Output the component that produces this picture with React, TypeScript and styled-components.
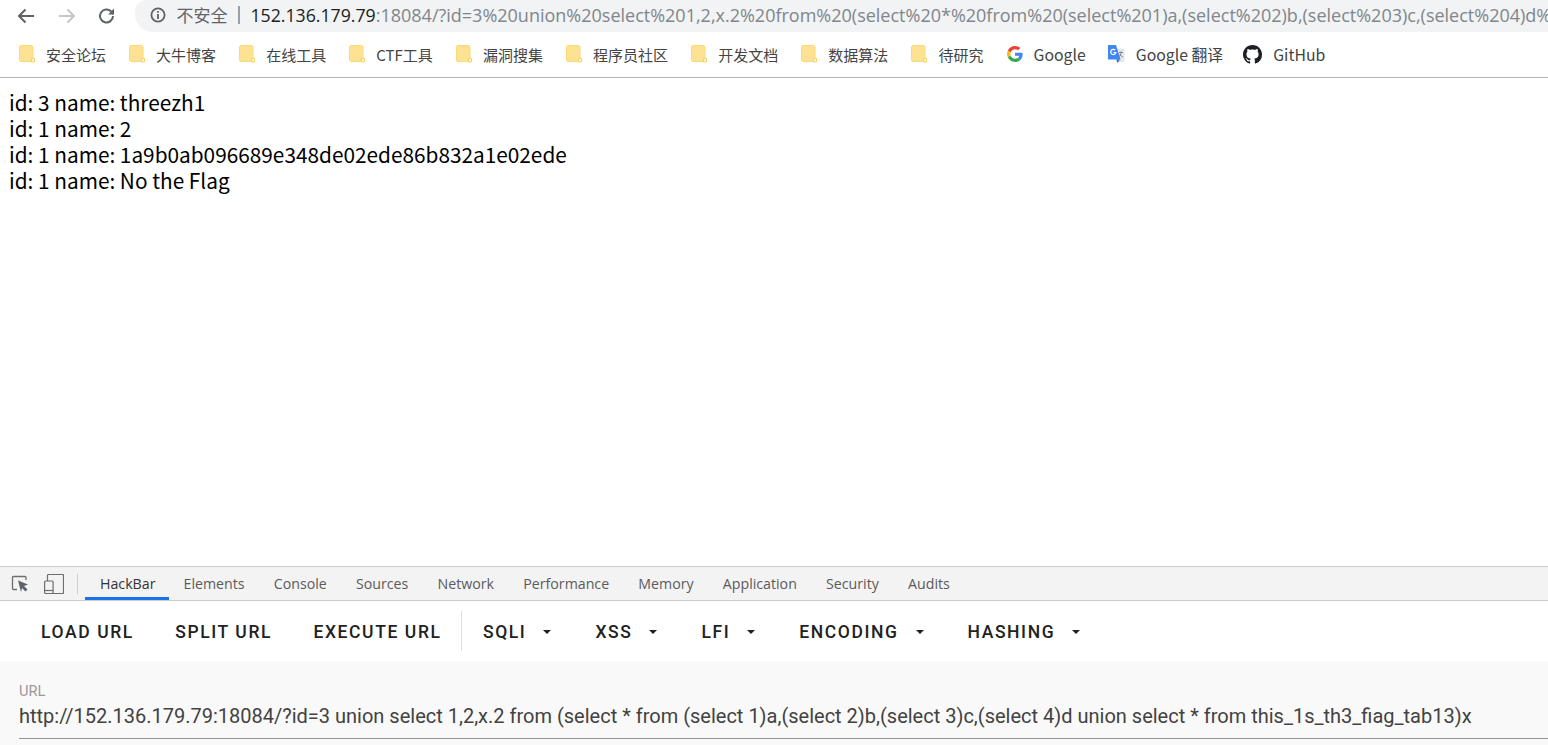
import * as React from 'react';
import styled, { createGlobalStyle } from 'styled-components';

const GlobalStyle = createGlobalStyle`
  html, body {
    margin: 0;
    padding: 0;
    height: 100%;
    background: #fff;
    overflow: hidden;
  }
`;

const Page = styled.div`
  display: flex;
  flex-direction: column;
  width: 1548px;
  height: 745px;
  overflow: hidden;
  font-family: 'Noto Sans CJK SC', 'Noto Sans', sans-serif;
`;

const Toolbar = styled.div`
  display: flex;
  align-items: center;
  height: 31px;
  flex-shrink: 0;
  padding: 0 0 2px 14px;
`;

const NavButton = styled.button<{ $disabled?: boolean }>`
  display: flex;
  align-items: center;
  justify-content: center;
  flex-shrink: 0;
  width: 24px;
  height: 24px;
  padding: 0;
  margin-right: 16.5px;
  border: 0;
  background: none;
  color: ${(p) => (p.$disabled ? '#c4c6c8' : '#5f6368')};
`;

const Omnibox = styled.div`
  display: flex;
  align-items: center;
  flex: 1;
  min-width: 0;
  align-self: flex-start;
  height: 32px;
  box-sizing: border-box;
  margin-left: -1px;
  padding: 0 0 3px 14px;
  border-radius: 12px 0 0 18px;
  background: #f1f3f4;
  font-family: 'Open Sans', 'Noto Sans CJK SC', sans-serif;
  font-size: 17.7px;
  white-space: nowrap;
  overflow: hidden;

  & > * {
    flex-shrink: 0;
  }
`;

const Warning = styled.span`
  margin-left: 10px;
  color: #5f6368;
  font-family: 'Noto Sans CJK SC', sans-serif;
  font-size: 17px;
`;

const Divider = styled.span`
  width: 2px;
  height: 18px;
  margin: 0 11px 0 10px;
  background: #9aa0a6;
`;

const Host = styled.span`
  color: #202124;
`;

const Rest = styled.span`
  color: #80868b;
  font-size: 18px;
`;

const Bookmarks = styled.div`
  display: flex;
  align-items: center;
  gap: 23.1px;
  height: 42px;
  flex-shrink: 0;
  padding: 0 0 2px 19px;
  border-bottom: 1px solid #b4b4b4;
`;

const Bookmark = styled.div<{ $latin?: boolean; $pull?: number }>`
  display: flex;
  align-items: center;
  gap: 11px;
  margin-left: ${(p) => p.$pull ?? 0}px;
  color: #444;
  font-size: ${(p) => (p.$latin ? '15.8px' : '15px')};
  white-space: nowrap;
`;

const Content = styled.div`
  flex: 1;
  padding: 11px 9px 0;
  color: #000;
  font-size: 20.8px;
  line-height: 26px;
`;

const Devtools = styled.div`
  flex-shrink: 0;
  border-top: 1px solid #ccc;
`;

const TabStrip = styled.div`
  display: flex;
  align-items: stretch;
  height: 33px;
  background: #f3f3f3;
  border-bottom: 1px solid #ccc;
  font-family: 'Open Sans', sans-serif;
  font-size: 14.2px;
`;

const DevIcons = styled.div`
  display: flex;
  align-items: center;
  gap: 13px;
  width: 85px;
  padding-left: 11px;
  box-sizing: border-box;
`;

const Sep = styled.span`
  width: 1px;
  height: 20px;
  background: #ccc;
`;

const Tab = styled.div<{ $active?: boolean }>`
  display: flex;
  align-items: center;
  padding: ${(p) => (p.$active ? '0 13.5px 0 15px' : '0 14.6px')};
  color: ${(p) => (p.$active ? '#333' : '#5a5a5a')};
  box-shadow: ${(p) => (p.$active ? 'inset 0 -3px 0 #1a73e8' : 'none')};
`;

const HackBar = styled.div`
  display: flex;
  align-items: center;
  height: 60px;
  box-sizing: border-box;
  padding: 2px 0 0 20.3px;
  background: #fff;
`;

const ActionButton = styled.div`
  display: flex;
  align-items: center;
  gap: 17px;
  padding: 0 20.7px;
  color: #212121;
  font-family: Roboto, sans-serif;
  font-size: 17.5px;
  font-weight: 500;
  letter-spacing: 1.6px;
  white-space: nowrap;
`;

const Caret = styled.span`
  width: 0;
  height: 0;
  margin-right: 2.6px;
  border-left: 4px solid transparent;
  border-right: 4px solid transparent;
  border-top: 4px solid #212121;
`;

const BarSep = styled.span`
  width: 1px;
  height: 40px;
  margin: 0 0.5px 2px -1.5px;
  background: #e0e0e0;
`;

const UrlPanel = styled.div`
  height: 84px;
  box-sizing: border-box;
  padding: 23px 0 0 19px;
  background: #f9f9f9;
  font-family: Roboto, sans-serif;
`;

const UrlLabel = styled.div`
  color: #9a9a9a;
  font-size: 14.6px;
  line-height: 15px;
`;

const UrlValue = styled.div`
  padding: 4px 0 8px;
  border-bottom: 1px solid #949494;
  color: #424242;
  font-size: 20px;
  line-height: 27px;
  white-space: nowrap;
`;

const FolderIcon = () => (
  <svg width="16" height="18" viewBox="0 0 16 18">
    <path d="M2 .5h10.500c.8 0 1.500.7 1.500 1.500v14.500H2c-.8 0-1.500-.7-1.500-1.500V2C.5 1.200 1.200.5 2 .5z" fill="#fde293" stroke="#f9d978" />
    <path d="M12.500 13.500h3v3.500h-3z" fill="#fff6d8" stroke="#f7d25f" />
  </svg>
);

const GoogleIcon = () => (
  <svg width="16" height="16" viewBox="0 0 48 48">
    <path fill="#EA4335" d="M24 9.500c3.500 0 6.700 1.200 9.100 3.600l6.800-6.800C35.900 2.400 30.500 0 24 0 14.600 0 6.500 5.400 2.600 13.200l7.900 6.200C12.400 13.700 17.700 9.500 24 9.500z" />
    <path fill="#4285F4" d="M46.900 24.500c0-1.600-.1-3.100-.4-4.500H24v9h12.900c-.6 3-2.200 5.500-4.800 7.200l7.700 6c4.500-4.200 7.100-10.300 7.100-17.700z" />
    <path fill="#FBBC05" d="M10.500 28.600c-.5-1.400-.8-3-.8-4.600s.3-3.200.8-4.600l-7.900-6.200C.9 16.500 0 20.100 0 24s.9 7.500 2.600 10.800l7.900-6.200z" />
    <path fill="#34A853" d="M24 48c6.500 0 11.900-2.100 15.900-5.800l-7.700-6c-2.200 1.400-4.900 2.300-8.200 2.300-6.300 0-11.600-4.200-13.500-9.900l-7.900 6.200C6.500 42.600 14.600 48 24 48z" />
  </svg>
);

const TranslateIcon = () => (
  <svg width="18" height="20" viewBox="0 0 18 20">
    <path d="M8 4.500h9.500v12.500a1 1 0 0 1-1 1H8.500z" fill="#e6e7e9" />
    <path d="M1 1h8l4.500 14.500H1z" fill="#4285f4" />
    <path d="M9.500 15.500h3.500L10.500 19z" fill="#3367d6" />
    <path d="M8.300 6.200a2.600 2.600 0 1 0 .6 2.300H6.400" fill="none" stroke="#fff" strokeWidth="1.200" />
    <path d="M12 8.500h4M14 7.500v1c0 2-1 3.700-2.500 4.500M12.800 10.500c.8 1.200 1.800 2 3.200 2.700" fill="none" stroke="#7a8089" strokeWidth="0.900" />
  </svg>
);

const GithubIcon = () => (
  <svg width="19" height="19" viewBox="0 0 16 16">
    <path
      fill="#1b1f23"
      d="M8 0C3.580 0 0 3.580 0 8c0 3.540 2.290 6.530 5.470 7.590.4.070.55-.17.55-.38 0-.19-.01-.82-.01-1.490-2.010.37-2.530-.49-2.690-.94-.09-.23-.48-.94-.82-1.130-.28-.15-.68-.52-.01-.53.63-.01 1.080.58 1.230.82.720 1.210 1.870.870 2.330.660.070-.520.280-.870.510-1.070-1.780-.2-3.640-.890-3.640-3.950 0-.870.310-1.590.820-2.150-.080-.2-.360-1.020.080-2.120 0 0 .670-.210 2.200.820.640-.180 1.320-.270 2-.270s1.360.090 2 .270c1.530-1.040 2.200-.820 2.200-.820.440 1.100.160 1.920.080 2.120.510.560.820 1.270.820 2.150 0 3.070-1.870 3.750-3.650 3.950.290.250.540.730.540 1.480 0 1.070-.010 1.930-.010 2.200 0 .210.150.460.550.380A8.010 8.010 0 0 0 16 8c0-4.420-3.580-8-8-8z"
    />
  </svg>
);

const InspectIcon = () => (
  <svg width="20" height="18" viewBox="0 0 20 18" fill="none">
    <path d="M6 14.500H2.500a1 1 0 0 1-1-1V2.500a1 1 0 0 1 1-1H14a1 1 0 0 1 1 1V5" stroke="#6e6e6e" strokeWidth="1.300" />
    <path d="M7 5.500l10 4-4 1.500 3.500 3.500-2 2-3.500-3.500L10 17z" fill="#5f6368" />
  </svg>
);

const DeviceIcon = () => (
  <svg width="20" height="20" viewBox="0 0 20 20" fill="none" stroke="#6e6e6e" strokeWidth="1.200">
    <path d="M3.500 7V1.500a1 1 0 0 1 1-1h14a1 1 0 0 1 1 1v17a1 1 0 0 1-1 1H9" />
    <rect x=".6" y="7" width="8.500" height="12.500" rx="1" />
    <path d="M.6 16.500h8.500" />
  </svg>
);

const bookmarks = ['安全论坛', '大牛博客', '在线工具', 'CTF工具', '漏洞搜集', '程序员社区', '开发文档', '数据算法', '待研究'];
const tabs = ['Elements', 'Console', 'Sources', 'Network', 'Performance', 'Memory', 'Application', 'Security', 'Audits'];
const menus = ['SQLI', 'XSS', 'LFI', 'ENCODING', 'HASHING'];

export default function App() {
  return (
    <Page>
      <GlobalStyle />
      <Toolbar>
        <NavButton>
          <svg width="20" height="20" viewBox="0 0 20 20" fill="none" stroke="currentColor" strokeWidth="2">
            <path d="M18 10H3M9.500 3.500L3 10l6.500 6.500" />
          </svg>
        </NavButton>
        <NavButton $disabled>
          <svg width="20" height="20" viewBox="0 0 20 20" fill="none" stroke="currentColor" strokeWidth="2">
            <path d="M2 10h15M10.500 3.500L17 10l-6.500 6.500" />
          </svg>
        </NavButton>
        <NavButton>
          <svg width="20" height="20" viewBox="0 0 20 20" fill="none" stroke="currentColor" strokeWidth="2">
            <path d="M16 10a6.500 6.500 0 1 1-1.900-4.600L16.500 8" />
            <path d="M17 2.500V8.500H11" fill="currentColor" stroke="none" />
          </svg>
        </NavButton>
        <Omnibox>
          <svg width="18" height="18" viewBox="0 0 18 18" fill="none" stroke="#5f6368" strokeWidth="1.800">
            <circle cx="9" cy="9" r="6.600" />
            <path d="M9 8v5M9 5v1.800" />
          </svg>
          <Warning>不安全</Warning>
          <Divider />
          <Host>152.136.179.79</Host>
          <Rest>:18084/?id=3%20union%20select%201,2,x.2%20from%20(select%20*%20from%20(select%201)a,(select%202)b,(select%203)c,(select%204)d%20union%20select%20*%20from%20this_1s_th3_fiag_tab13)x</Rest>
        </Omnibox>
      </Toolbar>
      <Bookmarks>
        {bookmarks.map((b) => (
          <Bookmark key={b}>
            <FolderIcon />
            {b}
          </Bookmark>
        ))}
        <Bookmark $latin>
          <GoogleIcon />
          Google
        </Bookmark>
        <Bookmark $latin $pull={-2}>
          <TranslateIcon />
          Google 翻译
        </Bookmark>
        <Bookmark $latin $pull={-3}>
          <GithubIcon />
          GitHub
        </Bookmark>
      </Bookmarks>
      <Content>
        <div>id: 3 name: threezh1</div>
        <div>id: 1 name: 2</div>
        <div>id: 1 name: 1a9b0ab096689e348de02ede86b832a1e02ede</div>
        <div>id: 1 name: No the Flag</div>
      </Content>
      <Devtools>
        <TabStrip>
          <DevIcons>
            <InspectIcon />
            <DeviceIcon />
            <Sep />
          </DevIcons>
          <Tab $active>HackBar</Tab>
          {tabs.map((t) => (
            <Tab key={t}>{t}</Tab>
          ))}
        </TabStrip>
        <HackBar>
          <ActionButton>LOAD URL</ActionButton>
          <ActionButton>SPLIT URL</ActionButton>
          <ActionButton>EXECUTE URL</ActionButton>
          <BarSep />
          {menus.map((m) => (
            <ActionButton key={m}>
              {m}
              <Caret />
            </ActionButton>
          ))}
        </HackBar>
        <UrlPanel>
          <UrlLabel>URL</UrlLabel>
          <UrlValue>http://152.136.179.79:18084/?id=3 union select 1,2,x.2 from (select * from (select 1)a,(select 2)b,(select 3)c,(select 4)d union select * from this_1s_th3_fiag_tab13)x</UrlValue>
        </UrlPanel>
      </Devtools>
    </Page>
  );
}
